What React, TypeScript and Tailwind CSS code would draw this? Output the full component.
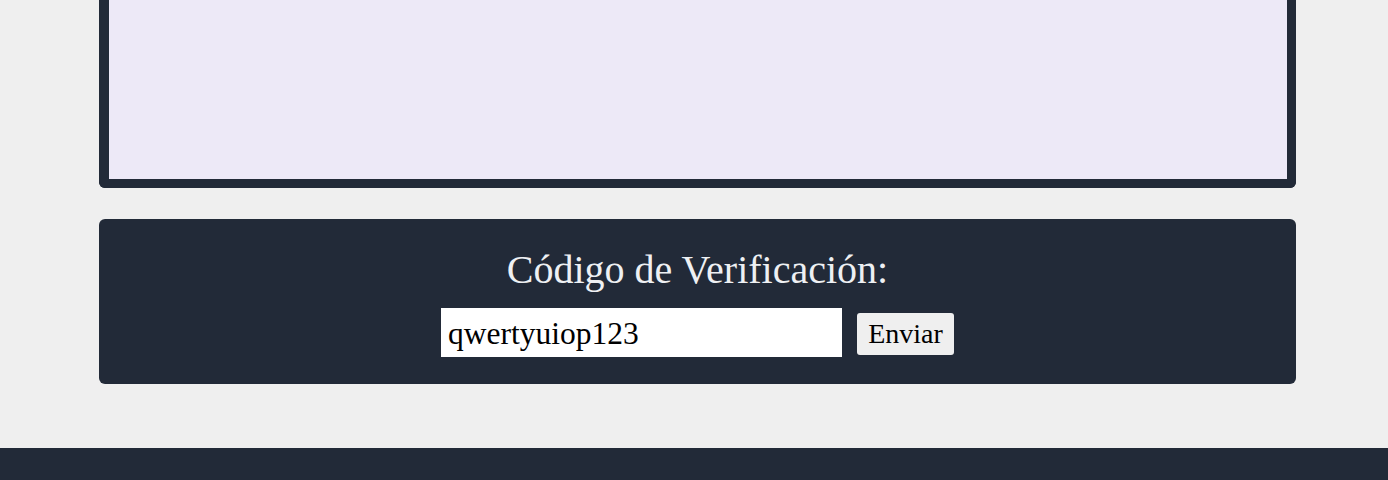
export default function App() {
  return (
    <div className="min-h-[480px] bg-[#efefef] flex flex-col" style={{ fontFamily: '"Liberation Serif", serif' }}>
      <main className="flex flex-col gap-[31px] pl-[99px] pr-[92px] pb-[64px]">
        <section className="h-[188px] rounded-b-[6px] border-[10px] border-t-0 border-r-[9px] border-b-[9px] border-[#222a38] bg-[#ede9f7]" />

        <section className="flex h-[165px] flex-col items-center rounded-[6px] bg-[#222a38] pt-[28px]">
          <h2 className="text-[40px] leading-[46px] text-[#eef0f3]">Código de Verificación:</h2>
          <div className="mt-[15px] flex items-center gap-[15px]">
            <input
              type="text"
              defaultValue="qwertyuiop123"
              className="h-[49px] w-[401px] bg-white px-[7px] pt-[2px] text-[31.5px] text-black outline-none"
            />
            <button
              type="button"
              className="mt-[2px] h-[42px] w-[97px] rounded-[3px] bg-[#efefef] text-[28px] leading-none text-black"
            >
              Enviar
            </button>
          </div>
        </section>
      </main>
      <footer className="h-[32px] bg-[#222a38]" />
    </div>
  );
}
